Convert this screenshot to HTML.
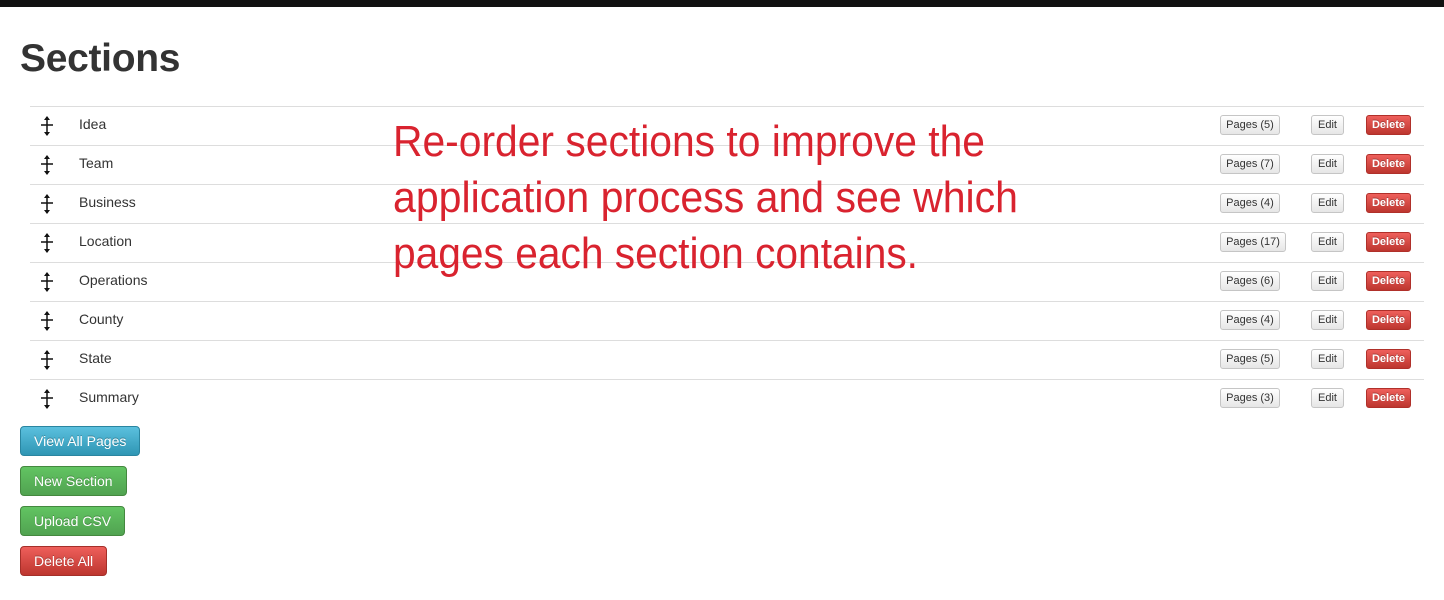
<!DOCTYPE html>
<html><head><style>
body{margin:0;background:#fff;font-family:"Liberation Sans",Helvetica,Arial,sans-serif;width:1444px;height:600px;overflow:hidden;position:relative;color:#333}
.top{position:absolute;left:0;top:0;width:1444px;height:7px;background:#111}
h1{position:absolute;left:20px;top:37px;margin:0;font-size:39px;font-weight:bold;color:#333;letter-spacing:-0.3px}
.row{position:absolute;left:30px;width:1394px;height:38px;border-top:1px solid #ddd}
.row .h{position:absolute;left:9px;top:9px}
.row .n{position:absolute;left:49px;top:9px;font-size:14px;color:#333}
.b{position:absolute;top:8px;height:18px;border:1px solid #c5c5c5;border-radius:3px;background:linear-gradient(#fff,#e6e6e6);font-size:11px;line-height:19px;text-align:center;color:#333;box-sizing:content-box}
.d{background:linear-gradient(#ee5f5b,#bd362f);border-color:#b0302a;color:#fff;font-weight:bold;text-shadow:0 -1px 0 rgba(0,0,0,.25)}
.bb{position:absolute;left:20px;height:28px;border-radius:4px;color:#fff;font-size:14px;line-height:28px;padding:0 13px;text-shadow:0 -1px 0 rgba(0,0,0,.25)}
.info{background:linear-gradient(#5bc0de,#2f96b4);border:1px solid #2a85a0}
.ok{background:linear-gradient(#62c462,#51a351);border:1px solid #44883f}
.dn{background:linear-gradient(#ee5f5b,#bd362f);border:1px solid #a42f29}
</style></head><body>
<div class="top"></div>
<h1>Sections</h1>
<div class="row" style="top:106px"><svg class="h" width="16" height="20" viewBox="0 0 16 20"><path d="M8 1V19M2 9H14" stroke="#111" stroke-width="1.5"/><path d="M5 4L8 0L11 4ZM5 16L8 20L11 16Z" fill="#111"/></svg><span class="n">Idea</span><span class="b" style="left:1190px;width:58px">Pages (5)</span><span class="b" style="left:1281px;width:31px">Edit</span><span class="b d" style="left:1336px;width:43px">Delete</span></div>
<div class="row" style="top:145px"><svg class="h" width="16" height="20" viewBox="0 0 16 20"><path d="M8 1V19M2 9H14" stroke="#111" stroke-width="1.5"/><path d="M5 4L8 0L11 4ZM5 16L8 20L11 16Z" fill="#111"/></svg><span class="n">Team</span><span class="b" style="left:1190px;width:58px">Pages (7)</span><span class="b" style="left:1281px;width:31px">Edit</span><span class="b d" style="left:1336px;width:43px">Delete</span></div>
<div class="row" style="top:184px"><svg class="h" width="16" height="20" viewBox="0 0 16 20"><path d="M8 1V19M2 9H14" stroke="#111" stroke-width="1.5"/><path d="M5 4L8 0L11 4ZM5 16L8 20L11 16Z" fill="#111"/></svg><span class="n">Business</span><span class="b" style="left:1190px;width:58px">Pages (4)</span><span class="b" style="left:1281px;width:31px">Edit</span><span class="b d" style="left:1336px;width:43px">Delete</span></div>
<div class="row" style="top:223px"><svg class="h" width="16" height="20" viewBox="0 0 16 20"><path d="M8 1V19M2 9H14" stroke="#111" stroke-width="1.5"/><path d="M5 4L8 0L11 4ZM5 16L8 20L11 16Z" fill="#111"/></svg><span class="n">Location</span><span class="b" style="left:1190px;width:64px">Pages (17)</span><span class="b" style="left:1281px;width:31px">Edit</span><span class="b d" style="left:1336px;width:43px">Delete</span></div>
<div class="row" style="top:262px"><svg class="h" width="16" height="20" viewBox="0 0 16 20"><path d="M8 1V19M2 9H14" stroke="#111" stroke-width="1.5"/><path d="M5 4L8 0L11 4ZM5 16L8 20L11 16Z" fill="#111"/></svg><span class="n">Operations</span><span class="b" style="left:1190px;width:58px">Pages (6)</span><span class="b" style="left:1281px;width:31px">Edit</span><span class="b d" style="left:1336px;width:43px">Delete</span></div>
<div class="row" style="top:301px"><svg class="h" width="16" height="20" viewBox="0 0 16 20"><path d="M8 1V19M2 9H14" stroke="#111" stroke-width="1.5"/><path d="M5 4L8 0L11 4ZM5 16L8 20L11 16Z" fill="#111"/></svg><span class="n">County</span><span class="b" style="left:1190px;width:58px">Pages (4)</span><span class="b" style="left:1281px;width:31px">Edit</span><span class="b d" style="left:1336px;width:43px">Delete</span></div>
<div class="row" style="top:340px"><svg class="h" width="16" height="20" viewBox="0 0 16 20"><path d="M8 1V19M2 9H14" stroke="#111" stroke-width="1.5"/><path d="M5 4L8 0L11 4ZM5 16L8 20L11 16Z" fill="#111"/></svg><span class="n">State</span><span class="b" style="left:1190px;width:58px">Pages (5)</span><span class="b" style="left:1281px;width:31px">Edit</span><span class="b d" style="left:1336px;width:43px">Delete</span></div>
<div class="row" style="top:379px"><svg class="h" width="16" height="20" viewBox="0 0 16 20"><path d="M8 1V19M2 9H14" stroke="#111" stroke-width="1.5"/><path d="M5 4L8 0L11 4ZM5 16L8 20L11 16Z" fill="#111"/></svg><span class="n">Summary</span><span class="b" style="left:1190px;width:58px">Pages (3)</span><span class="b" style="left:1281px;width:31px">Edit</span><span class="b d" style="left:1336px;width:43px">Delete</span></div>
<svg style="position:absolute;left:0;top:0" width="1444" height="600">
<g fill="#d9232f" font-family="Liberation Sans Narrow, Liberation Sans, sans-serif" font-size="44">
<text x="393" y="156" textLength="592" lengthAdjust="spacingAndGlyphs">Re-order sections to improve the</text>
<text x="393" y="212" textLength="625" lengthAdjust="spacingAndGlyphs">application process and see which</text>
<text x="393" y="268" textLength="525" lengthAdjust="spacingAndGlyphs">pages each section contains.</text>
</g></svg>
<div class="bb info" style="top:426px">View All Pages</div>
<div class="bb ok" style="top:466px">New Section</div>
<div class="bb ok" style="top:506px">Upload CSV</div>
<div class="bb dn" style="top:546px">Delete All</div>
</body></html>
